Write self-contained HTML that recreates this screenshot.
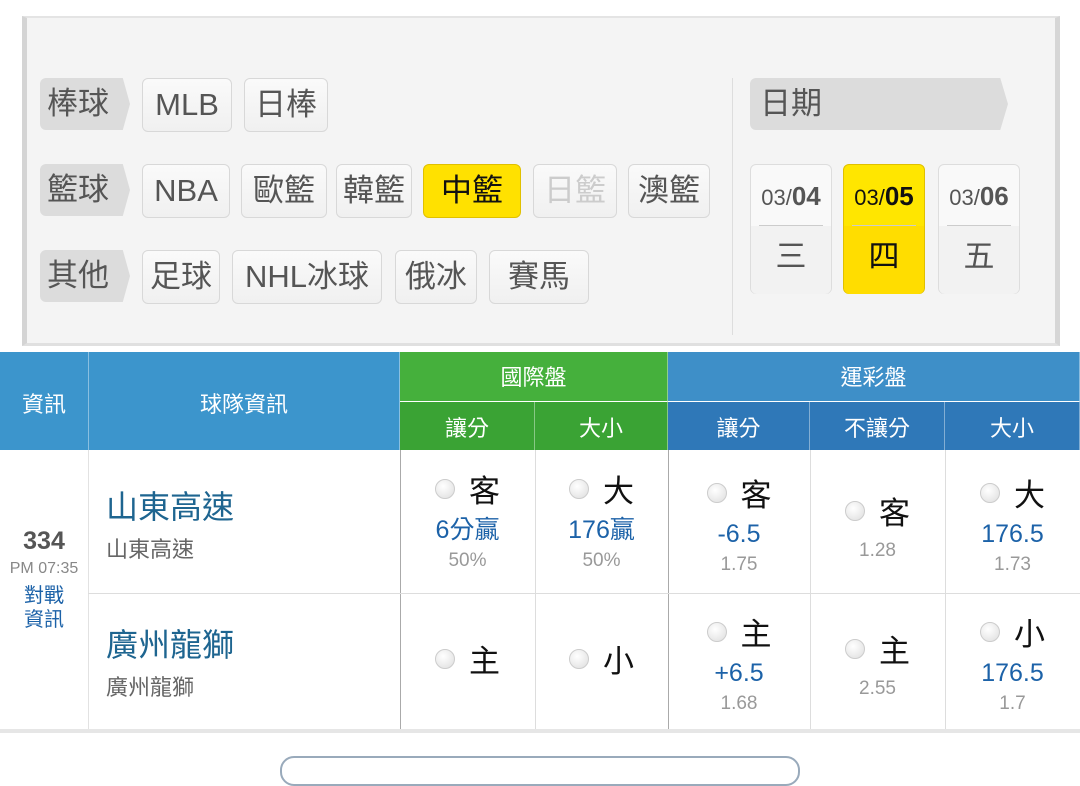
<!DOCTYPE html>
<html><head><meta charset="utf-8"><style>
*{margin:0;padding:0;box-sizing:border-box}
body{width:1080px;height:765px;overflow:hidden;background:#fff;font-family:"Liberation Sans","Noto Sans CJK TC",sans-serif;position:relative}
.abs{position:absolute}
.panel{left:22px;top:16px;width:1038px;height:330px;background:#f4f4f4;border-left:5px solid #d4d4d4;border-right:5px solid #d6d6d6;border-top:2px solid #e4e4e4;border-bottom:3px solid #e0e0e0}
.tab{position:absolute;height:52px;background:#dcdcdc;color:#555;font-size:31px;line-height:52px;padding-left:7px;border-radius:6px 0 0 6px;clip-path:polygon(0 0,92% 0,100% 50%,92% 100%,0 100%)}
.btn{position:absolute;height:54px;background:linear-gradient(#fafafa,#f0f0f0);border:1px solid #d8d8d8;border-radius:6px;color:#555;font-size:31px;line-height:52px;text-align:center}
.y{background:#ffe100;border-color:#e0c000;color:#111}
.dis{color:#ccc}
.date{position:absolute;top:164px;height:130px;width:80px;border:1px solid #ddd;border-radius:6px;background:#f9f9f9;text-align:center}
.date .d{font-size:22px;color:#555;height:60px;line-height:62px}
.date .d b{font-size:26px}
.date hr{border:0;border-top:1px solid #ccc;margin:0 8px}
.date .w{font-size:31px;color:#555;line-height:62px;background:#f2f2f2;height:68px;border-radius:0 0 6px 6px}
.date.y .w{background:#ffdd00;color:#111}
.date.y{background:#ffe600}
.h{position:absolute;color:#fff;font-size:22px;text-align:center;border-right:1px solid rgba(255,255,255,.4)}
.bl{background:#3c95cc}
.gr{background:#3aa334}
.cell{position:absolute;text-align:center}
.rad{display:inline-block;width:20px;height:20px;border-radius:50%;background:radial-gradient(circle at 40% 35%,#fff,#ddd);border:1px solid #ccc;vertical-align:middle;margin-right:14px}
.big{font-size:31px;color:#111;vertical-align:middle}
.v{font-size:25px;color:#1c62a8;line-height:38px}
.p{font-size:19px;color:#999;line-height:24px}
</style></head><body>
<div class="abs panel"></div>
<div class="tab" style="left:40px;top:78px;width:90px">棒球</div>
<div class="tab" style="left:40px;top:164px;width:90px">籃球</div>
<div class="tab" style="left:40px;top:250px;width:90px">其他</div>
<div class="btn" style="left:142px;top:78px;width:90px">MLB</div>
<div class="btn" style="left:244px;top:78px;width:84px">日棒</div>
<div class="btn" style="left:142px;top:164px;width:88px">NBA</div>
<div class="btn" style="left:241px;top:164px;width:86px">歐籃</div>
<div class="btn" style="left:336px;top:164px;width:76px">韓籃</div>
<div class="btn y" style="left:423px;top:164px;width:98px">中籃</div>
<div class="btn dis" style="left:533px;top:164px;width:84px">日籃</div>
<div class="btn" style="left:628px;top:164px;width:82px">澳籃</div>
<div class="btn" style="left:142px;top:250px;width:78px">足球</div>
<div class="btn" style="left:232px;top:250px;width:150px">NHL冰球</div>
<div class="btn" style="left:395px;top:250px;width:82px">俄冰</div>
<div class="btn" style="left:489px;top:250px;width:100px">賽馬</div>
<div class="abs" style="left:732px;top:78px;width:1px;height:257px;background:#ddd"></div>
<div class="tab" style="left:750px;top:78px;width:258px;padding-left:10px;clip-path:polygon(0 0,97% 0,100% 50%,97% 100%,0 100%)">日期</div>
<div class="date" style="left:750px;width:82px"><div class="d">03/<b>04</b></div><hr><div class="w">三</div></div>
<div class="date y" style="left:843px;width:82px;border-color:#e0c000"><div class="d" style="color:#111">03/<b>05</b></div><hr><div class="w">四</div></div>
<div class="date" style="left:938px;width:82px"><div class="d">03/<b>06</b></div><hr><div class="w">五</div></div>

<div class="h bl" style="left:0;top:352px;width:89px;height:98px;line-height:106px">資訊</div>
<div class="h bl" style="left:89px;top:352px;width:311px;height:98px;line-height:106px">球隊資訊</div>
<div class="h gr" style="left:400px;top:352px;width:268px;height:50px;line-height:52px;background:#45b03c;border-bottom:1px solid #fff">國際盤</div>
<div class="h gr" style="left:400px;top:402px;width:135px;height:48px;line-height:54px">讓分</div>
<div class="h gr" style="left:535px;top:402px;width:133px;height:48px;line-height:54px">大小</div>
<div class="h bl" style="left:668px;top:352px;width:412px;height:50px;line-height:52px;background:#3e8fc8;border-bottom:1px solid #fff">運彩盤</div>
<div class="h bl" style="left:668px;top:402px;width:142px;height:48px;line-height:54px;background:#2f78b8">讓分</div>
<div class="h bl" style="left:810px;top:402px;width:135px;height:48px;line-height:54px;background:#2f78b8">不讓分</div>
<div class="h bl" style="left:945px;top:402px;width:135px;height:48px;line-height:54px;background:#2f78b8">大小</div>

<div class="abs" style="left:88px;top:450px;width:1px;height:280px;background:#e2e2e2"></div>
<div class="abs" style="left:400px;top:450px;width:1px;height:280px;background:#aaa"></div>
<div class="abs" style="left:535px;top:450px;width:1px;height:280px;background:#ddd"></div>
<div class="abs" style="left:668px;top:450px;width:1px;height:280px;background:#aaa"></div>
<div class="abs" style="left:810px;top:450px;width:1px;height:280px;background:#ddd"></div>
<div class="abs" style="left:945px;top:450px;width:1px;height:280px;background:#ddd"></div>
<div class="abs" style="left:88px;top:593px;width:992px;height:1px;background:#ddd"></div>
<div class="abs" style="left:0;top:729px;width:1080px;height:4px;background:#e6e6e6"></div>
<div class="abs" style="left:280px;top:756px;width:520px;height:30px;border:2px solid #9ab;border-radius:14px"></div>

<div class="cell" style="left:0;top:527px;width:88px">
<div style="font-size:25px;font-weight:bold;color:#555">334</div>
<div style="font-size:16px;color:#888;margin-top:4px">PM 07:35</div>
<div style="font-size:20px;color:#1c62a8;line-height:24px;margin-top:6px">對戰<br>資訊</div></div>
<div class="cell" style="left:106px;top:482px;text-align:left"><div style="font-size:32px;color:#1e6590">山東高速</div><div style="font-size:22px;color:#666;margin-top:4px">山東高速</div></div>
<div class="cell" style="left:106px;top:620px;text-align:left"><div style="font-size:32px;color:#1e6590">廣州龍獅</div><div style="font-size:22px;color:#666;margin-top:4px">廣州龍獅</div></div>

<div class="cell" style="left:400px;top:466px;width:135px"><span class="rad"></span><span class="big">客</span><div class="v">6分贏</div><div class="p">50%</div></div>
<div class="cell" style="left:535px;top:466px;width:133px"><span class="rad"></span><span class="big">大</span><div class="v">176贏</div><div class="p">50%</div></div>
<div class="cell" style="left:668px;top:470px;width:142px"><span class="rad"></span><span class="big">客</span><div class="v">-6.5</div><div class="p">1.75</div></div>
<div class="cell" style="left:810px;top:488px;width:135px"><span class="rad"></span><span class="big">客</span><div class="p" style="margin-top:6px">1.28</div></div>
<div class="cell" style="left:945px;top:470px;width:135px"><span class="rad"></span><span class="big">大</span><div class="v">176.5</div><div class="p">1.73</div></div>

<div class="cell" style="left:400px;top:636px;width:135px"><span class="rad"></span><span class="big">主</span></div>
<div class="cell" style="left:535px;top:636px;width:133px"><span class="rad"></span><span class="big">小</span></div>
<div class="cell" style="left:668px;top:609px;width:142px"><span class="rad"></span><span class="big">主</span><div class="v">+6.5</div><div class="p">1.68</div></div>
<div class="cell" style="left:810px;top:626px;width:135px"><span class="rad"></span><span class="big">主</span><div class="p" style="margin-top:6px">2.55</div></div>
<div class="cell" style="left:945px;top:609px;width:135px"><span class="rad"></span><span class="big">小</span><div class="v">176.5</div><div class="p">1.7</div></div>
</body></html>
